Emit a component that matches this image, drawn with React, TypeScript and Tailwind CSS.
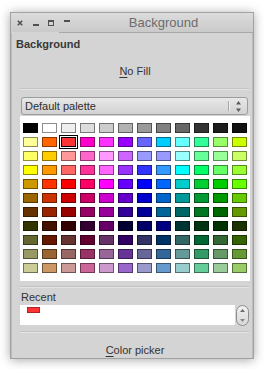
import React from "react";

const rows: string[][] = [
  ["#000000", "#ffffff", "#eeeeee", "#dddddd", "#cccccc", "#b2b2b2", "#999999", "#808080", "#666666", "#333333", "#1c1c1c", "#111111"],
  ["#ffff99", "#ff6600", "#ff3333", "#ff00cc", "#ff33ff", "#9900ff", "#6666ff", "#00ccff", "#66ffff", "#33ff99", "#99ff66", "#ccff00"],
  ["#ffff66", "#ffcc00", "#ff9999", "#ff66cc", "#ff99ff", "#cc66ff", "#9999ff", "#9999ff", "#99ffff", "#66ff99", "#99ff99", "#ccff66"],
  ["#ffff00", "#ff9900", "#ff6666", "#ff3399", "#ff66ff", "#9933ff", "#3333ff", "#3399ff", "#00ffff", "#00ff66", "#66ff66", "#99ff33"],
  ["#cc9900", "#ff3300", "#ff0000", "#ff0066", "#ff00ff", "#6600ff", "#0000ff", "#0066ff", "#00cccc", "#00cc33", "#00cc00", "#66ff00"],
  ["#996600", "#cc3300", "#cc0000", "#cc0066", "#cc00cc", "#6600cc", "#0000cc", "#0066cc", "#009999", "#009933", "#009900", "#66cc00"],
  ["#663300", "#992200", "#990000", "#990066", "#990099", "#330099", "#000099", "#006699", "#006666", "#007722", "#006600", "#669900"],
  ["#333300", "#441100", "#330000", "#330033", "#660066", "#000033", "#000066", "#000080", "#003333", "#003311", "#003300", "#1a3300"],
  ["#666633", "#661900", "#663333", "#660033", "#663366", "#330066", "#333366", "#003366", "#336666", "#006633", "#336633", "#336600"],
  ["#999966", "#996633", "#996666", "#993366", "#996699", "#663399", "#666699", "#336699", "#669999", "#339966", "#669966", "#669933"],
  ["#cccc99", "#cc9966", "#cc9999", "#cc6699", "#cc99cc", "#9966cc", "#9999cc", "#6699cc", "#99cccc", "#66cc99", "#99cc99", "#99cc66"],
];

function Separator() {
  return (
    <div className="flex flex-col">
      <div className="h-[1px] bg-[#c2c2c2]" />
      <div className="h-[1px] bg-[#e4e4e4]" />
    </div>
  );
}

export default function App() {
  return (
    <div
      className="w-[264px] h-[369px] bg-white pt-[12px] pl-[10px] overflow-hidden"
      style={{ fontFamily: '"Liberation Sans", Arial, sans-serif' }}
    >
      <div className="w-[244px] h-[347px] border border-[#a2a2a2] bg-[#d4d4d4] shadow-[0_1px_10px_rgba(0,0,0,0.35)] flex flex-col">
        {/* title bar */}
        <div className="h-[20px] flex bg-gradient-to-b from-[#dcdcdc] to-[#c9c9c9]">
          <div className="w-[48px] h-full flex items-center border-b border-[#d4d4d4] pl-[1px]">
            <div className="w-[16px] h-full flex items-center justify-center">
              <svg width="6" height="6" viewBox="0 0 6 6">
                <path d="M0.8 0.8 L5.2 5.2 M5.2 0.8 L0.8 5.2" stroke="#505050" strokeWidth="1.6" />
              </svg>
            </div>
            <div className="w-[16px] h-full flex items-center justify-center">
              <svg width="6" height="6" viewBox="0 0 6 6">
                <rect x="0" y="4" width="6" height="2" fill="#505050" />
              </svg>
            </div>
            <div className="w-[16px] h-full flex items-center justify-center">
              <svg width="6" height="6" viewBox="0 0 6 6">
                <rect x="0.5" y="0.5" width="5" height="5" fill="none" stroke="#505050" strokeWidth="1" />
                <rect x="0" y="0" width="6" height="2" fill="#505050" />
              </svg>
            </div>
          </div>
          <div className="flex-1 h-full flex items-center border-b border-[#a8a8a8]">
            <div className="w-[16px] h-full flex items-center justify-center">
              <svg width="6" height="6" viewBox="0 0 6 6">
                <rect x="0" y="0" width="6" height="2" fill="#505050" />
              </svg>
            </div>
            <div className="flex-1 text-center text-[13px] leading-[15px] text-[#6c6c6c] pr-[1px]">Background</div>
          </div>
        </div>

        {/* content */}
        <div className="flex-1 flex flex-col shadow-[inset_1px_0_0_#bcbcbc,inset_-1px_0_0_#bcbcbc]">
          <div className="pl-[5px] pt-[5px] text-[11px] leading-[13px] font-bold text-[#383838]">Background</div>
          <div className="ml-[9px] w-[230px] flex flex-col text-[11px] text-[#333333]">
            <div className="mt-[14px] leading-[13px] text-center">
              <span className="underline underline-offset-[2px]">N</span>o Fill
            </div>
            <div className="mt-[10px] mr-[1px]">
              <Separator />
            </div>
            <div className="mt-[7px] ml-[1px] w-[227px] h-[18px] rounded-[3px] border border-[#9c9c9c] bg-gradient-to-b from-[#e8e8e8] to-[#d2d2d2] flex items-center">
              <div className="flex-1 pl-[3px] leading-[13px] text-[#2e2e2e]">Default palette</div>
              <div className="w-[1px] h-[10px] bg-[#a8a8a8]" />
              <div className="w-[1px] h-[10px] bg-[#efefef]" />
              <div className="w-[17px] h-full flex flex-col items-center justify-center gap-[3px]">
                <svg width="5" height="4" viewBox="0 0 5 4">
                  <path d="M2.5 0 L5 3.5 L0 3.5 Z" fill="#5a5a5a" />
                </svg>
                <svg width="5" height="4" viewBox="0 0 5 4">
                  <path d="M0 0.5 L5 0.5 L2.5 4 Z" fill="#5a5a5a" />
                </svg>
              </div>
            </div>
            <div className="mt-[1px] w-[230px] h-[165px] bg-white pl-[1px] pt-[5px]">
              {rows.map((row, j) => (
                <div key={j} className="flex">
                  {row.map((c, i) =>
                    j === 1 && i === 2 ? (
                      <div key={i} className="w-[19px] h-[14px] border border-black bg-white p-[1px]">
                        <div className="w-full h-full border border-black" style={{ backgroundColor: c }} />
                      </div>
                    ) : (
                      <div key={i} className="w-[19px] h-[14px] p-[2px]">
                        <div className="w-full h-full border border-black/45" style={{ backgroundColor: c }} />
                      </div>
                    )
                  )}
                </div>
              ))}
            </div>
            <div className="mt-[5px] mr-[1px]">
              <Separator />
            </div>
            <div className="mt-[3px] pl-[1px] leading-[13px] text-[#333333]">Recent</div>
            <div className="mt-[1px] h-[20px] flex items-center">
              <div className="w-[215px] h-[20px] bg-white pl-[7px] pt-[2px]">
                <div className="w-[13px] h-[6px] bg-[#ff3333] border border-black/30" />
              </div>
              <div className="ml-[1px] w-[13px] h-[21px] rounded-full border border-[#8e8e8e] bg-gradient-to-b from-[#f0f0f0] to-[#d8d8d8] flex flex-col items-center justify-between py-[3px]">
                <svg width="5" height="3" viewBox="0 0 5 3">
                  <path d="M2.5 0 L5 3 L0 3 Z" fill="#6a6a6a" />
                </svg>
                <svg width="5" height="3" viewBox="0 0 5 3">
                  <path d="M0 0 L5 0 L2.5 3 Z" fill="#8a8a8a" />
                </svg>
              </div>
            </div>
            <div className="mt-[6px] mr-[1px]">
              <Separator />
            </div>
            <div className="mt-[11px] leading-[13px] text-center text-[#333333]">
              <span className="underline underline-offset-[2px]">C</span>olor picker
            </div>
          </div>
        </div>
      </div>
    </div>
  );
}
